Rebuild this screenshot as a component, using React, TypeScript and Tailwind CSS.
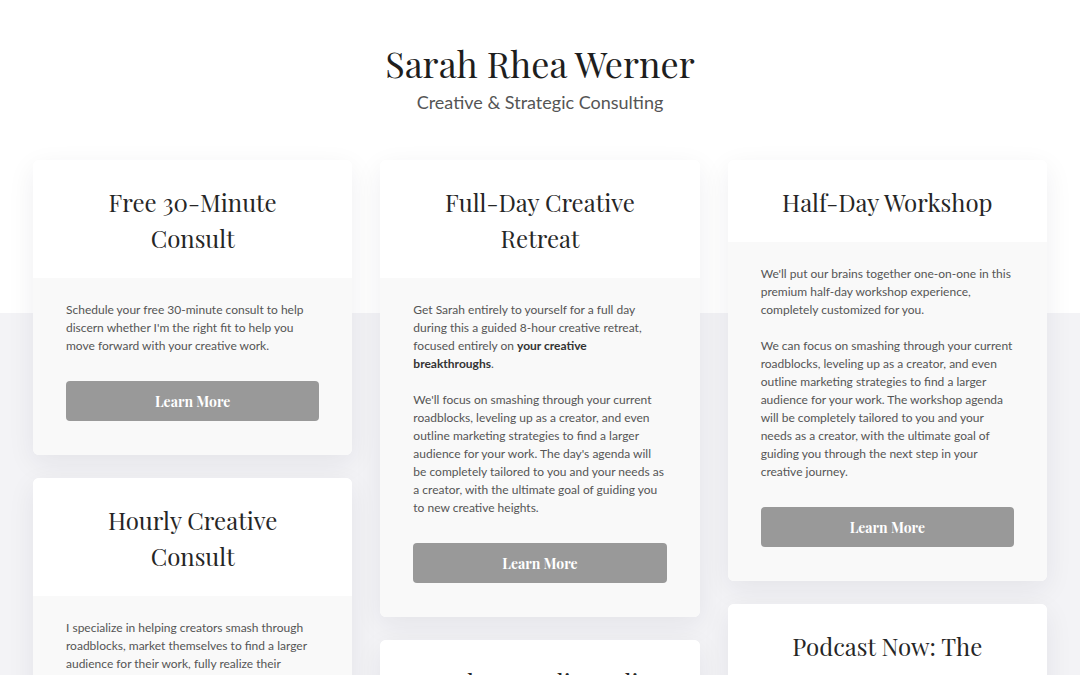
const serif = "font-['Playfair_Display','Liberation_Serif',serif]";

type Offer = {
  title: string[];
  body: React.ReactNode[];
  button?: boolean;
};

const columns: Offer[][] = [
  [
    {
      title: ['Free 30-Minute', 'Consult'],
      body: [
        "Schedule your free 30-minute consult to help discern whether I'm the right fit to help you move forward with your creative work.",
      ],
      button: true,
    },
    {
      title: ['Hourly Creative', 'Consult'],
      body: [
        'I specialize in helping creators smash through roadblocks, market themselves to find a larger audience for their work, fully realize their creative potential, and build sustainable creative careers.',
      ],
      button: true,
    },
  ],
  [
    {
      title: ['Full-Day Creative', 'Retreat'],
      body: [
        <>
          Get Sarah entirely to yourself for a full day during this a guided 8-hour creative retreat, focused entirely on{' '}
          <strong className="font-bold text-[#333]">your creative breakthroughs</strong>.
        </>,
        <>
          We'll focus on smashing through your current roadblocks, leveling up as a creator, and even outline marketing
          strategies to find a larger audience for your work. The day's agenda will
          <br />
          be completely tailored to you and your needs as a creator, with the ultimate goal of guiding you to new
          creative heights.
        </>,
      ],
      button: true,
    },
    {
      title: ['Podcast Audio Audit'],
      body: ['A detailed review of your show, with notes on sound, structure and growth.'],
      button: true,
    },
  ],
  [
    {
      title: ['Half-Day Workshop'],
      body: [
        "We'll put our brains together one-on-one in this premium half-day workshop experience, completely customized for you.",
        'We can focus on smashing through your current roadblocks, leveling up as a creator, and even outline marketing strategies to find a larger audience for your work. The workshop agenda will be completely tailored to you and your needs as a creator, with the ultimate goal of guiding you through the next step in your creative journey.',
      ],
      button: true,
    },
    {
      title: ['Podcast Now: The', 'Course'],
      body: ['Learn how to launch, grow and sustain the podcast of your dreams.'],
      button: true,
    },
  ],
];

function Card({ offer }: { offer: Offer }) {
  return (
    <div className="rounded-[6px] overflow-hidden bg-white shadow-[0_8px_28px_rgba(30,30,60,0.07)]">
      <div className="bg-white px-6 pt-6 pb-[22px]">
        <h2 className={`${serif} text-[24px] leading-[36px] text-[#262626] text-center`}>
          {offer.title.map((line) => (
            <span key={line} className="block">
              {line}
            </span>
          ))}
        </h2>
      </div>
      <div className="bg-[#f9f9f9] px-[33px] pt-[23px] pb-[34px]">
        <div className="flex flex-col gap-[18px] text-[12px] leading-[18px] text-[#555]">
          {offer.body.map((p, i) => (
            <p key={i}>{p}</p>
          ))}
        </div>
        {offer.button && (
          <button
            className={`${serif} mt-[26px] w-full h-10 rounded-[4px] bg-[#999999] text-white font-bold text-[14px]`}
          >
            Learn More
          </button>
        )}
      </div>
    </div>
  );
}

export default function App() {
  return (
    <div className="min-h-screen font-['Lato',sans-serif] bg-[linear-gradient(to_bottom,#ffffff_313px,#f3f3f6_313px)]">
      <header className="pt-[40px] pb-[47px] text-center">
        <h1 className={`${serif} text-[36px] leading-[46px] text-[#1e1e1e]`}>Sarah Rhea Werner</h1>
        <p className="mt-[5px] text-[18px] leading-[22px] text-[#555]">Creative &amp; Strategic Consulting</p>
      </header>
      <main className="grid grid-cols-3 gap-x-[28px] px-[33px] pb-10 items-start">
        {columns.map((col, i) => (
          <div key={i} className="flex flex-col gap-[23px]">
            {col.map((offer) => (
              <Card key={offer.title.join(' ')} offer={offer} />
            ))}
          </div>
        ))}
      </main>
    </div>
  );
}
